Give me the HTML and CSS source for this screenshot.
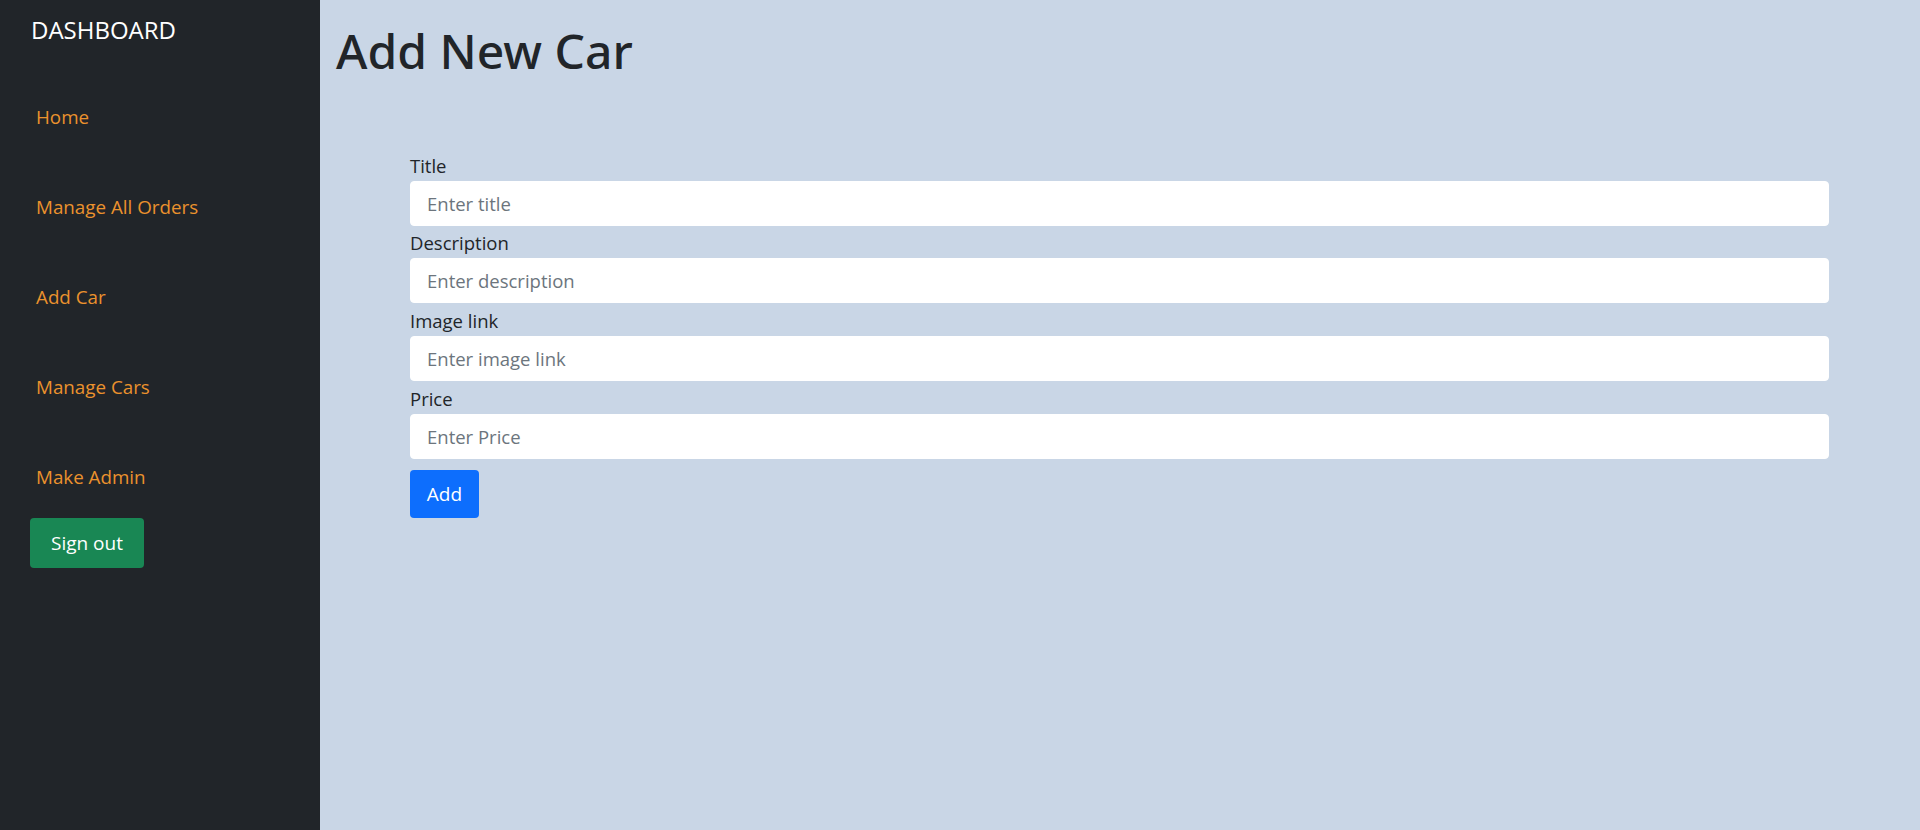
FILE: index.html
```html
<!DOCTYPE html>
<html lang="en">
<head>
<meta charset="utf-8">
<title>Dashboard - Add New Car</title>
<link rel="stylesheet" href="styles.css">
</head>
<body>
<div class="layout">
  <aside class="sidebar">
    <div class="brand">DASHBOARD</div>
    <nav class="nav">
      <a class="nav-link" href="#">Home</a>
      <a class="nav-link" href="#">Manage All Orders</a>
      <a class="nav-link" href="#">Add Car</a>
      <a class="nav-link" href="#">Manage Cars</a>
      <a class="nav-link" href="#">Make Admin</a>
    </nav>
    <button class="btn btn-signout" type="button">Sign out</button>
  </aside>
  <main class="main">
    <h1 class="page-title">Add New Car</h1>
    <form class="car-form">
      <div class="field">
        <label class="field-label" for="title">Title</label>
        <input class="field-input" id="title" type="text" placeholder="Enter title">
      </div>
      <div class="field">
        <label class="field-label" for="desc">Description</label>
        <input class="field-input" id="desc" type="text" placeholder="Enter description">
      </div>
      <div class="field">
        <label class="field-label" for="img">Image link</label>
        <input class="field-input" id="img" type="text" placeholder="Enter image link">
      </div>
      <div class="field">
        <label class="field-label" for="price">Price</label>
        <input class="field-input" id="price" type="text" placeholder="Enter Price">
      </div>
      <div class="actions">
        <button class="btn btn-add" type="submit">Add</button>
      </div>
    </form>
  </main>
</div>
</body>
</html>
```

FILE: styles.css
```css
* { box-sizing: border-box; }

html, body {
  margin: 0;
  height: 100%;
}

body {
  font-family: "Open Sans", "Noto Sans", sans-serif;
  color: #212529;
  background: #c9d6e6;
}

.layout {
  display: flex;
  min-height: 100vh;
}

.sidebar {
  width: 320px;
  flex: 0 0 320px;
  background: #212529;
  padding: 15px 0 0 30px;
  display: flex;
  flex-direction: column;
  align-items: flex-start;
}

.brand {
  color: #ffffff;
  font-size: 24px;
  line-height: 30px;
  padding-left: 1px;
}

.nav {
  display: flex;
  flex-direction: column;
  padding-top: 58px;
}

.nav-link {
  color: #eb922d;
  text-decoration: none;
  font-size: 18.8px;
  line-height: 28px;
  height: 90px;
  display: flex;
  align-items: flex-start;
  padding-left: 6px;
}

.nav-link:last-child {
  height: 55px;
}

.btn {
  font-family: inherit;
  border: 0;
  color: #ffffff;
  border-radius: 4px;
  cursor: pointer;
}

.btn-signout {
  background: #198754;
  width: 114px;
  height: 50px;
  font-size: 19px;
}

.main {
  flex: 1;
  padding: 21px 91px 0 90px;
}

.page-title {
  margin: 0 0 0 -74px;
  font-family: "Noto Sans", "Open Sans", sans-serif;
  font-size: 48px;
  font-weight: 500;
  line-height: 60px;
  color: #212529;
}

.car-form {
  display: flex;
  flex-direction: column;
  padding-top: 67px;
}

.field {
  display: flex;
  flex-direction: column;
}

.field-label {
  font-size: 18.5px;
  line-height: 26px;
  height: 32.67px;
  display: flex;
  align-items: flex-end;
  padding-bottom: 2px;
}

.field-input {
  height: 45px;
  border: 1px solid #ffffff;
  border-radius: 4px;
  background: #ffffff;
  padding: 0 16px;
  font-family: inherit;
  font-size: 18.5px;
  color: #212529;
  outline: none;
}

.field-input::placeholder {
  color: #6c757d;
}

.actions {
  padding-top: 11px;
}

.btn-add {
  background: #0d6efd;
  width: 69px;
  height: 48px;
  font-size: 19px;
}
```
